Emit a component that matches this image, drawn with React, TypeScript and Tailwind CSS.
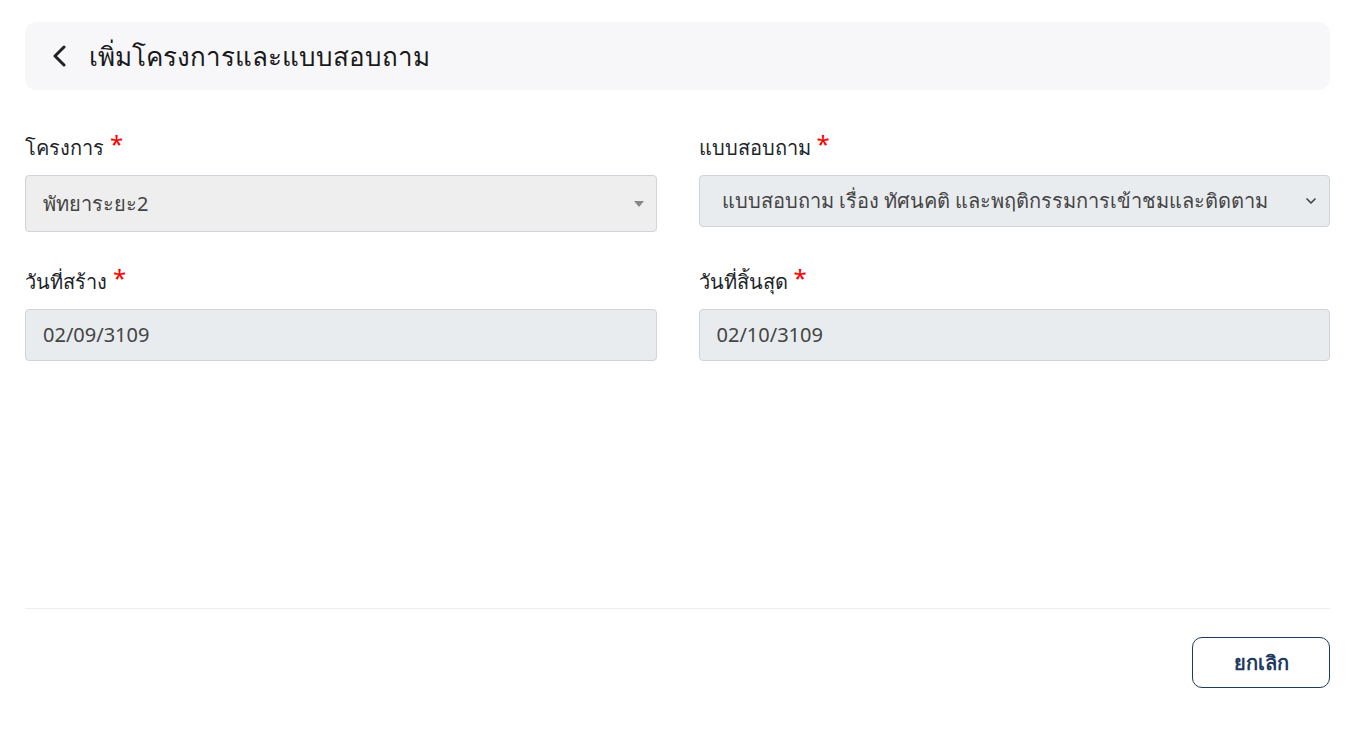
import { ChevronDown } from "lucide-react";

function Label({ text }: { text: string }) {
  return (
    <label className="flex items-start gap-[6px] text-[20px] leading-[28px] text-[#212529] mb-[13px]">
      {text}
      <span className="text-[#ff0000] text-[24px] leading-[20px]">*</span>
    </label>
  );
}

export default function App() {
  return (
    <div className="min-h-screen bg-white px-[25px] pt-[22px] pr-[24px] font-['Noto_Sans',sans-serif]">
      {/* Header */}
      <div className="h-[68px] rounded-xl bg-[#f7f7f9] flex items-center pl-[27px] gap-[22px]">
        <svg width="15" height="22" viewBox="0 0 15 22" className="shrink-0">
          <path d="M12 2L3 11l9 9" fill="none" stroke="#222" strokeWidth="3" strokeLinecap="round" strokeLinejoin="round" />
        </svg>
        <h1 className="text-[26px] text-[#1a1a1a]">เพิ่มโครงการและแบบสอบถาม</h1>
      </div>

      {/* Form */}
      <div className="grid grid-cols-2 gap-x-[42px] mt-[44px]">
        <div>
          <Label text="โครงการ" />
          <div className="h-[57px] rounded-[4px] border border-[#cfd4da] bg-[#eeeeee] flex items-center justify-between pl-[17px] pr-[12px]">
            <span className="text-[20px] text-[#444]">พัทยาระยะ2</span>
            <svg width="10" height="6" viewBox="0 0 10 6">
              <path d="M0 0h10L5 6z" fill="#888" />
            </svg>
          </div>
        </div>
        <div>
          <Label text="แบบสอบถาม" />
          <div className="h-[52px] rounded-[4px] border border-[#ced4da] bg-[#e9ecef] flex items-center justify-between pl-[22px] pr-[10px]">
            <span className="text-[20px] text-[#444] whitespace-nowrap overflow-hidden w-[572px]">
              แบบสอบถาม เรื่อง ทัศนคติ และพฤติกรรมการเข้าชมและติดตาม
            </span>
            <ChevronDown className="w-[16px] h-[16px] text-[#444] shrink-0" strokeWidth={2.5} />
          </div>
        </div>

        <div className="mt-[36px]">
          <Label text="วันที่สร้าง" />
          <div className="h-[52px] rounded-[4px] border border-[#ced4da] bg-[#e9ecef] flex items-center pl-[17px]">
            <span className="text-[20px] text-[#444]">02/09/3109</span>
          </div>
        </div>
        <div className="mt-[36px]">
          <Label text="วันที่สิ้นสุด" />
          <div className="h-[52px] rounded-[4px] border border-[#ced4da] bg-[#e9ecef] flex items-center pl-[17px]">
            <span className="text-[20px] text-[#444]">02/10/3109</span>
          </div>
        </div>
      </div>

      {/* Footer */}
      <div className="mt-[247px] border-t border-[#eeeeee] flex justify-end pt-[28px]">
        <button className="w-[138px] h-[51px] rounded-[10px] border border-[#1e3a5f] text-[#1e3a5f] text-[20px] font-semibold">
          ยกเลิก
        </button>
      </div>
    </div>
  );
}
